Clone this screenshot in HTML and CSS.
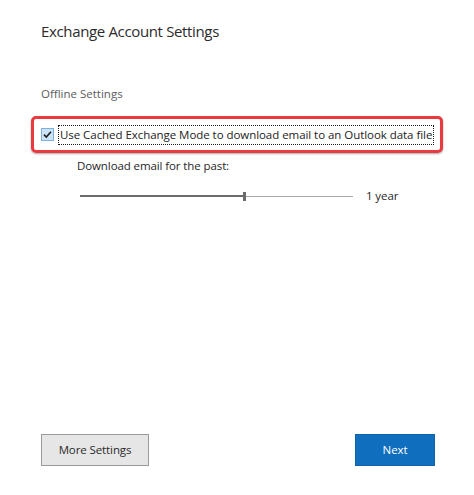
FILE: index.html
```html
<!DOCTYPE html>
<html>
<head>
<meta charset="utf-8">
<link rel="stylesheet" href="styles.css">
</head>
<body>
<div class="page">
  <h1 class="title">Exchange Account Settings</h1>
  <div class="section">Offline Settings</div>
  <div class="highlight">
    <span class="checkbox">
      <svg width="11" height="11" viewBox="0 0 11 11"><path d="M2 5.6 L4.3 8 L9 2.8" fill="none" stroke="#1f1f1f" stroke-width="1.6"/></svg>
    </span>
    <span class="cb-label">Use Cached Exchange Mode to download email to an Outlook data file</span>
  </div>
  <div class="download">Download email for the past:</div>
  <div class="slider-row">
    <div class="track">
      <div class="filled"></div>
      <div class="thumb"></div>
      <div class="rest"></div>
    </div>
    <span class="value">1 year</span>
  </div>
  <div class="buttons">
    <button class="btn btn-secondary">More Settings</button>
    <button class="btn btn-primary">Next</button>
  </div>
</div>
</body>
</html>
```
FILE: styles.css
```css
html, body {
  margin: 0;
  padding: 0;
  background: #ffffff;
}
body {
  font-family: "Open Sans", "Noto Sans", sans-serif;
  color: #262626;
}
.page {
  height: 495px;
  box-sizing: border-box;
  padding: 0 39px 29px 41px;
  display: flex;
  flex-direction: column;
}
.title {
  margin: 20px 0 0 0;
  font-size: 15px;
  font-weight: 400;
  line-height: 22px;
  color: #2b2b2b;
  letter-spacing: -0.35px;
}
.section {
  margin-top: 44px;
  font-size: 11.5px;
  line-height: 16px;
  color: #5c5c5c;
  letter-spacing: 0;
}
.highlight {
  margin: 14px 0 0 -10px;
  width: 412px;
  height: 37px;
  box-sizing: border-box;
  border: 3px solid #ea3a40;
  border-radius: 5px;
  box-shadow: 0 1px 2px rgba(0,0,0,0.35);
  display: flex;
  align-items: center;
  padding-left: 7px;
}
.checkbox {
  width: 13px;
  height: 13px;
  box-sizing: border-box;
  border: 1px solid #7fb0de;
  background: #cce4f7;
  display: flex;
  align-items: center;
  justify-content: center;
  flex: none;
}
.cb-label {
  margin-left: 4px;
  border: 1px dotted #1a1a1a;
  padding: 1px 1px 1px 1px;
  font-size: 11.5px;
  line-height: 16px;
  color: #222;
  white-space: nowrap;
  letter-spacing: -0.05px;
}
.download {
  margin: 5px 0 0 36px;
  font-size: 11.5px;
  line-height: 16px;
  color: #262626;
  letter-spacing: -0.1px;
}
.slider-row {
  margin: 14px 0 0 39px;
  display: flex;
  align-items: center;
  height: 16px;
}
.track {
  width: 273px;
  display: flex;
  align-items: center;
}
.filled {
  width: 163px;
  height: 2px;
  background: #6b6b6b;
}
.thumb {
  width: 3px;
  height: 9px;
  background: #6b6b6b;
}
.rest {
  flex: 1;
  height: 1px;
  background: #a8a8a8;
}
.value {
  margin-left: 13px;
  font-size: 11.5px;
  line-height: 16px;
  color: #262626;
  letter-spacing: -0.1px;
}
.buttons {
  margin-top: auto;
  display: flex;
  justify-content: space-between;
}
.btn {
  height: 32px;
  font-family: "Open Sans", "Noto Sans", sans-serif;
  font-size: 11.5px;
  letter-spacing: -0.1px;
  padding: 0 0 2px 0;
  box-sizing: border-box;
  cursor: pointer;
}
.btn-secondary {
  width: 108px;
  background: #e6e6e6;
  border: 1px solid #9a9a9a;
  color: #2a2a2a;
}
.btn-primary {
  width: 80px;
  background: #106ebe;
  border: 1px solid #0e63ab;
  color: #ffffff;
}
```
